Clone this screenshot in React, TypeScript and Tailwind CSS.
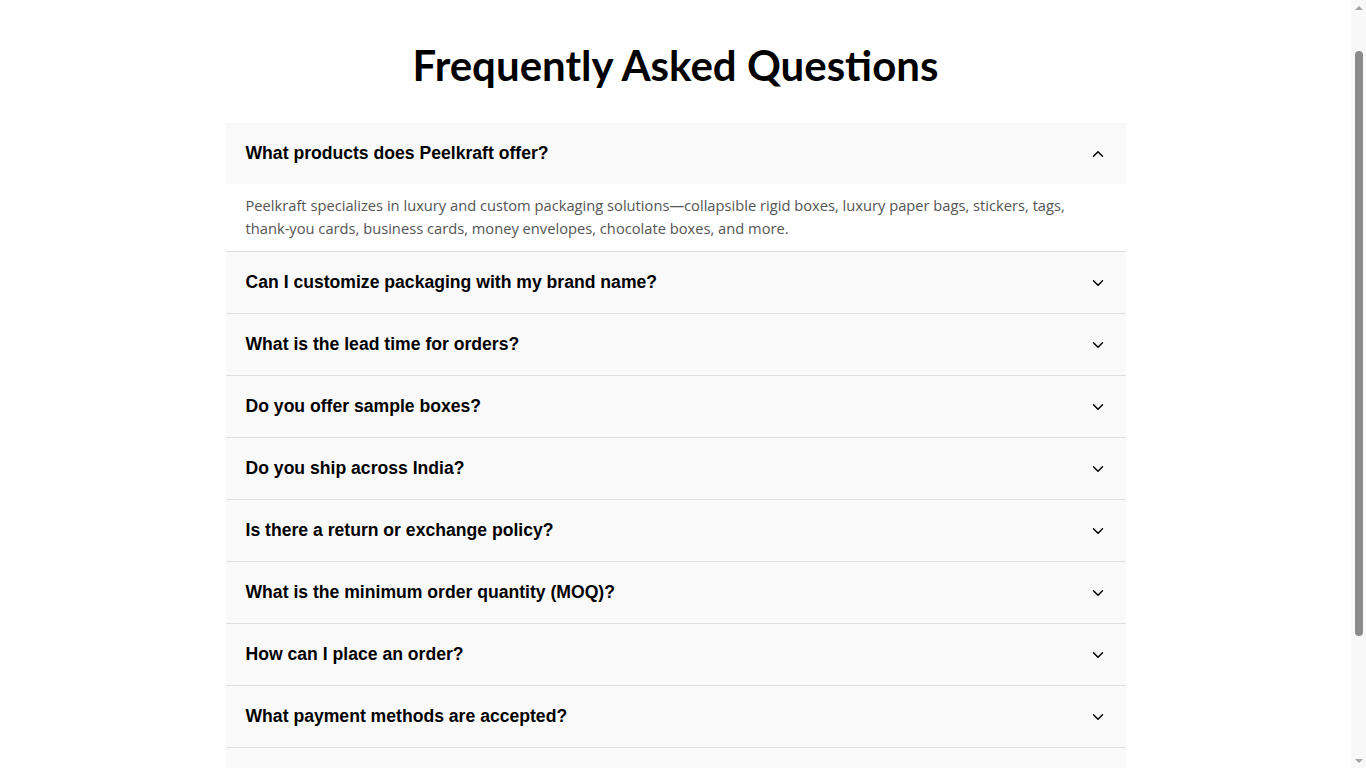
import { useState } from "react";
import { ChevronDown, ChevronUp } from "lucide-react";

type FaqItem = {
  q: string;
  a: string;
};

const faqs: FaqItem[] = [
  {
    q: "What products does Peelkraft offer?",
    a: "Peelkraft specializes in luxury and custom packaging solutions—collapsible rigid boxes, luxury paper bags, stickers, tags, thank-you cards, business cards, money envelopes, chocolate boxes, and more.",
  },
  {
    q: "Can I customize packaging with my brand name?",
    a: "Yes. Every product can be customized with your logo, brand colours and finishes like foiling, embossing and spot UV.",
  },
  {
    q: "What is the lead time for orders?",
    a: "Most orders are produced and dispatched within 10–15 working days after artwork approval.",
  },
  {
    q: "Do you offer sample boxes?",
    a: "Yes, sample boxes are available so you can check the quality before placing a bulk order.",
  },
  {
    q: "Do you ship across India?",
    a: "We ship to all serviceable pin codes across India.",
  },
  {
    q: "Is there a return or exchange policy?",
    a: "As products are custom made, returns are accepted only for manufacturing defects.",
  },
  {
    q: "What is the minimum order quantity (MOQ)?",
    a: "The MOQ depends on the product and finish; it usually starts from 100 units.",
  },
  {
    q: "How can I place an order?",
    a: "You can place an order through our website or contact our team on WhatsApp or email.",
  },
  {
    q: "What payment methods are accepted?",
    a: "We accept UPI, credit and debit cards, net banking and bank transfers.",
  },
  {
    q: "Do you offer bulk discounts?",
    a: "Yes, pricing gets better as the order quantity increases.",
  },
  {
    q: "How can I contact support?",
    a: "Reach us by email, phone or WhatsApp, Monday to Saturday.",
  },
];

export default function App() {
  const [open, setOpen] = useState<number | null>(0);

  return (
    <div className="flex h-screen bg-white">
      <main className="min-w-0 flex-1 overflow-y-auto [scrollbar-width:none] [&::-webkit-scrollbar]:hidden">
        <section className="mx-auto max-w-[900px] pt-[38px] pb-[100px]">
          <h2
            className="text-center text-[42px] font-bold leading-[54px] text-black"
            style={{ fontFamily: "Lato, 'Noto Sans', sans-serif" }}
          >
            Frequently Asked Questions
          </h2>

          <div className="mt-[31px]">
            {faqs.map((item, i) => {
              const isOpen = open === i;
              return (
                <div key={item.q} className="border-b border-[#dddddd]">
                  <button
                    type="button"
                    onClick={() => setOpen(isOpen ? null : i)}
                    className="flex h-[61px] w-full items-center justify-between bg-[#f9f9f9] pl-5 pr-[19px] text-left"
                  >
                    <span
                      className="text-[17.6px] font-bold text-black"
                      style={{ fontFamily: "'Liberation Sans', Arial, sans-serif" }}
                    >
                      {item.q}
                    </span>
                    {isOpen ? (
                      <ChevronUp size={18} strokeWidth={2} className="text-black" />
                    ) : (
                      <ChevronDown size={18} strokeWidth={2} className="text-black" />
                    )}
                  </button>
                  {isOpen ? (
                    <div
                      className="bg-white px-5 pt-[10px] pb-[11px] text-[14.7px] leading-[23px] text-[#555555]"
                      style={{ fontFamily: "'Open Sans', sans-serif" }}
                    >
                      {item.a}
                    </div>
                  ) : null}
                </div>
              );
            })}
          </div>
        </section>
      </main>

      {/* page scrollbar */}
      <aside className="flex w-[15px] shrink-0 flex-col items-center bg-[#f8f8f8]">
        <div className="flex h-[15px] items-center justify-center">
          <span className="h-0 w-0 border-x-[4px] border-b-[4px] border-x-transparent border-b-[#a3a3a3]" />
        </div>
        <div className="mt-[36px] h-[585px] w-[8px] rounded-full bg-[#8b8b8b]" />
        <div className="flex-1" />
        <div className="flex h-[15px] items-center justify-center">
          <span className="h-0 w-0 border-x-[4px] border-t-[4px] border-x-transparent border-t-[#a3a3a3]" />
        </div>
      </aside>
    </div>
  );
}
